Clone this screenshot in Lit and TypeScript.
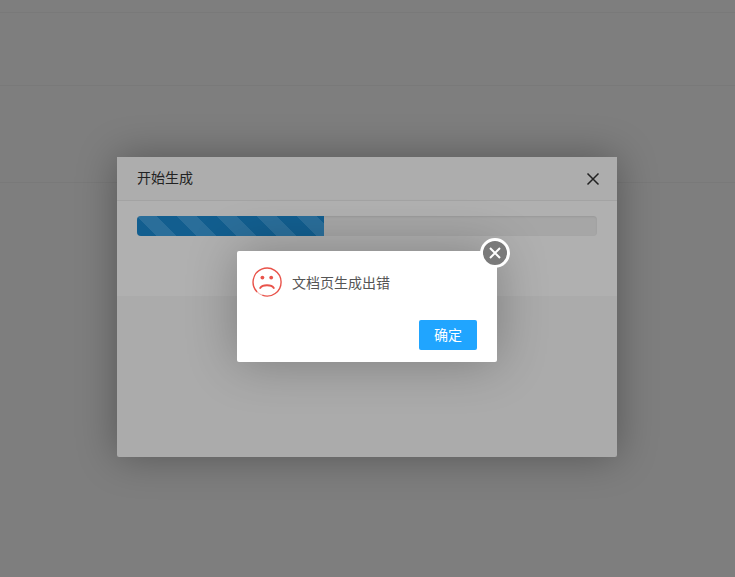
import { LitElement, html, css } from "lit";
import { customElement } from "lit/decorators.js";

@customElement("app-root")
export class AppRoot extends LitElement {
  static styles = css`
    :host {
      display: block;
      position: relative;
      width: 735px;
      height: 577px;
      overflow: hidden;
      background: #7e7e7e;
      font-family: "Liberation Sans", "Noto Sans CJK SC", sans-serif;
      font-size: 14px;
    }
    .rows { display: flex; flex-direction: column; }
    .row { border-bottom: 1px solid #797979; box-sizing: border-box; }
    .r1 { height: 13px; }
    .r2 { height: 73px; }
    .r3 { height: 97px; }
    .modal {
      position: absolute;
      left: 117px;
      top: 157px;
      width: 500px;
      height: 300px;
      background: #ababab;
      border-radius: 2px;
      box-shadow: 0 0 40px rgba(0, 0, 0, 0.32);
      display: flex;
      flex-direction: column;
    }
    .head {
      height: 44px;
      box-sizing: border-box;
      border-bottom: 1px solid #a3a3a3;
      padding: 0 16px 3px 20px;
      display: flex;
      align-items: center;
      justify-content: space-between;
      color: #222;
      background: #adadad;
    }
    .head svg { display: block; margin-top: 3px; }
    .body {
      height: 95px;
      box-sizing: border-box;
      padding: 15px 20px 0;
      background: #b0b0b0;
    }
    .track {
      height: 20px;
      border-radius: 4px;
      background: #a6a6a6;
      box-shadow: inset 0 1px 2px rgba(0, 0, 0, 0.08);
      overflow: hidden;
    }
    .bar {
      height: 100%;
      background-color: #125e8f;
      background-image: linear-gradient(
        45deg,
        rgba(255, 255, 255, 0.1) 25%,
        transparent 25%,
        transparent 50%,
        rgba(255, 255, 255, 0.1) 50%,
        rgba(255, 255, 255, 0.1) 75%,
        transparent 75%,
        transparent
      );
      background-size: 40px 40px;
    }
    .alert {
      position: absolute;
      left: 237px;
      top: 251px;
      width: 260px;
      height: 111px;
      background: #fff;
      border-radius: 2px;
      box-shadow: 0 0 50px rgba(0, 0, 0, 0.28);
      box-sizing: border-box;
      padding: 16px 20px 12px 15px;
      display: flex;
      flex-direction: column;
      justify-content: space-between;
    }
    .msg {
      display: flex;
      align-items: center;
      gap: 10px;
      color: #555;
      font-size: 14px;
    }
    .msg svg { display: block; }
    .foot { display: flex; justify-content: flex-end; }
    .ok {
      width: 58px;
      height: 30px;
      border: 0;
      padding: 0 0 2px;
      border-radius: 2px;
      background: #20a5ff;
      color: #fff;
      font: inherit;
      font-size: 14px;
    }
    .close {
      position: absolute;
      left: 480px;
      top: 238px;
      width: 30px;
      height: 30px;
      box-sizing: border-box;
      border: 3px solid #fff;
      border-radius: 50%;
      background: #7a7a7a;
      display: flex;
      align-items: center;
      justify-content: center;
    }
    .close svg { display: block; }
  `;

  render() {
    return html`
      <div class="rows">
        <div class="row r1"></div>
        <div class="row r2"></div>
        <div class="row r3"></div>
      </div>
      <div class="modal">
        <div class="head">
          <span>开始生成</span>
          <svg width="16" height="16" viewBox="0 0 16 16">
            <path d="M2.5 2.5L13.5 13.5M13.5 2.5L2.5 13.5" stroke="#222" stroke-width="1.5" fill="none" />
          </svg>
        </div>
        <div class="body">
          <div class="track"><div class="bar" style="width:${(187 / 460) * 100}%"></div></div>
        </div>
      </div>
      <div class="alert">
        <div class="msg">
          <svg width="30" height="30" viewBox="0 0 30 30" fill="none">
            <path d="M5.1 24.9A14 14 0 1 1 10.2 28.2" stroke="#e9534a" stroke-width="1.4" />
            <path d="M5.1 24.9A14 14 0 0 0 10.2 28.2" stroke="#f3a9a4" stroke-width="1" />
            <circle cx="10.4" cy="10.6" r="1.9" fill="#e9534a" />
            <circle cx="19.2" cy="10.6" r="1.9" fill="#e9534a" />
            <path d="M8.2 21C10.5 17.4 19.5 17.4 21.8 21" stroke="#e9534a" stroke-width="1.9" stroke-linecap="round" />
          </svg>
          <span>文档页生成出错</span>
        </div>
        <div class="foot"><button class="ok">确定</button></div>
      </div>
      <div class="close">
        <svg width="14" height="14" viewBox="0 0 14 14">
          <path d="M2 2L12 12M12 2L2 12" stroke="#fff" stroke-width="2" fill="none" />
        </svg>
      </div>
    `;
  }
}
